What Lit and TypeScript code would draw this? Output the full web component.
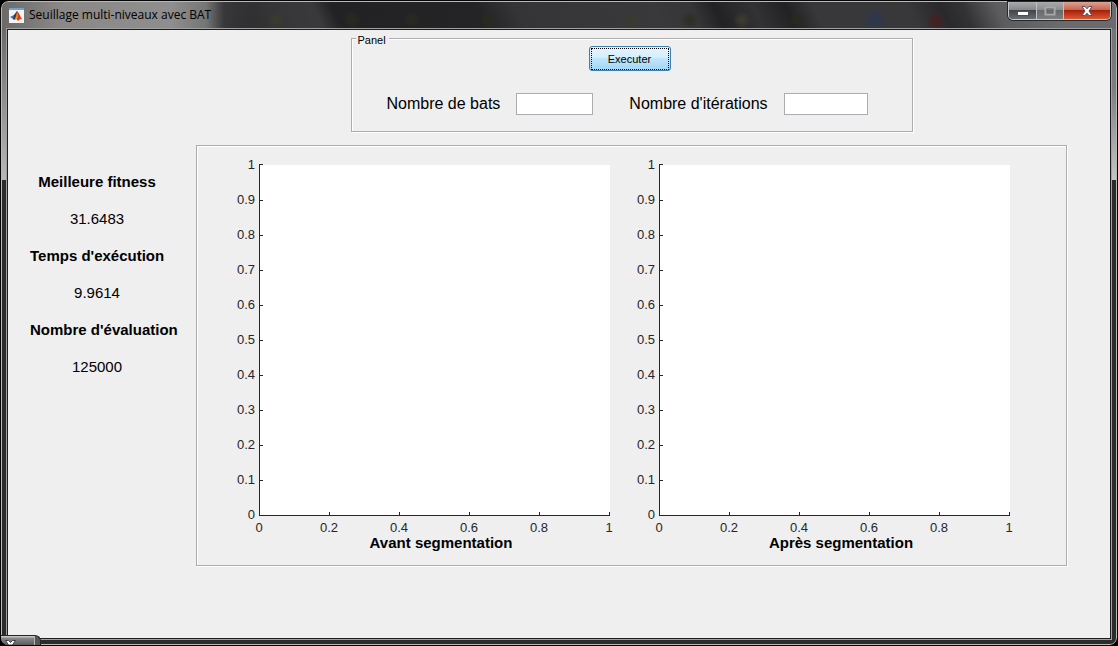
import { LitElement, html, svg, css } from "lit";
import { customElement, property } from "lit/decorators.js";

const ORIGIN_X = 30;
const ORIGIN_Y = 365;
const SIDE = 350;

@customElement("plot-axes")
class PlotAxes extends LitElement {
  @property() caption = "";

  static styles = css`
    :host { display: block; min-width: 0; }
    .figure { margin: 0; }
    .axes { display: block; width: 100%; height: auto; }
    .area { fill: #fff; }
    .line { stroke: #262626; stroke-width: 1; fill: none; shape-rendering: crispEdges; }
    .tick { font: 13px "Liberation Sans", Arial, sans-serif; fill: #262626; }
    .end { text-anchor: end; }
    .mid { text-anchor: middle; }
    .caption {
      padding-left: 24px;
      font: bold 15px/18px "Liberation Sans", Arial, sans-serif;
      text-align: center;
      color: #000;
    }
  `;

  render() {
    const ys = Array.from({ length: 11 }, (_, i) => i);
    const xs = Array.from({ length: 6 }, (_, i) => i);
    const label = (v: number) => String(Math.round(v * 10) / 10);
    return html`
      <figure class="figure">
        <svg class="axes" viewBox="0 0 400 384" role="img" aria-label=${this.caption}>
          <rect class="area" x=${ORIGIN_X} y=${ORIGIN_Y - SIDE} width=${SIDE + 1} height=${SIDE}></rect>
          <path class="line" d="M30.5 14V365.5H381"></path>
          ${ys.map((i) => {
            const y = ORIGIN_Y - i * 35;
            return svg`
              <path class="line" d="M31 ${y + (i === 10 ? -0.5 : 0.5)}h3"></path>
              <text class="tick end" x="26" y=${y + 4}>${label(i / 10)}</text>`;
          })}
          ${xs.map((i) => {
            const x = ORIGIN_X + i * 70;
            return svg`
              <path class="line" d="M${x + 0.5} 365v-3"></path>
              <text class="tick mid" x=${x} y="382">${label(i / 5)}</text>`;
          })}
        </svg>
        <figcaption class="caption">${this.caption}</figcaption>
      </figure>
    `;
  }
}

@customElement("app-root")
class AppRoot extends LitElement {
  static styles = css`
    :host {
      display: block;
      min-height: 100vh;
      background: #000;
      font-family: "Liberation Sans", Arial, sans-serif;
      color: #000;
    }
    * { box-sizing: border-box; }
    .window {
      position: relative;
      display: flex;
      flex-direction: column;
      min-height: 100vh;
      border: 1px solid #050505;
      border-radius: 8px;
      overflow: hidden;
    }
    .frame {
      flex: 1;
      display: flex;
      flex-direction: column;
      padding: 0 5px 5px;
      border: 1px solid #b9b9bb;
      border-radius: 7px;
      background:
        linear-gradient(90deg, #6c6969 0, #8b8987 60px, #8e8e8e 170px, #757575 204px, #38383a 222px, transparent 250px) 0 0 / 100% 27px no-repeat,
        radial-gradient(circle at 873px 18px, #2f374a 4px, transparent 13px) 0 0 / 100% 27px no-repeat,
        radial-gradient(circle at 934px 19px, #432022 3px, transparent 10px) 0 0 / 100% 27px no-repeat,
        radial-gradient(circle at 274px 18px, #3b3a2e 2px, transparent 9px) 0 0 / 100% 27px no-repeat,
        radial-gradient(circle at 350px 18px, #2a2920 2px, transparent 9px) 0 0 / 100% 27px no-repeat,
        radial-gradient(circle at 410px 18px, #2a2920 2px, transparent 9px) 0 0 / 100% 27px no-repeat,
        radial-gradient(circle at 486px 18px, #2a2920 2px, transparent 9px) 0 0 / 100% 27px no-repeat,
        radial-gradient(circle at 630px 18px, #3b3a2e 2px, transparent 9px) 0 0 / 100% 27px no-repeat,
        radial-gradient(circle at 688px 18px, #2f2e24 2px, transparent 9px) 0 0 / 100% 27px no-repeat,
        radial-gradient(circle at 740px 18px, #3b3a2e 2px, transparent 9px) 0 0 / 100% 27px no-repeat,
        radial-gradient(circle at 795px 18px, #2a2920 2px, transparent 9px) 0 0 / 100% 27px no-repeat,
        linear-gradient(65deg, #2a2a2c 200px, #38383a 270px, #39393b 292px, #222224 308px, #242426 440px, #353537 475px, #39393b 600px, #353537 634px, #222224 655px, #323234 690px, #222224 720px, #38383a 745px, #38383a 830px, #29292b 860px, #323234 880px, #5c5c5e 910px, #6a6b6d 960px) 0 0 / 100% 27px no-repeat,
        linear-gradient(#6c6969, #8c8887 60px, #bab6b5 150px) 0 27px / 5px 151px no-repeat,
        linear-gradient(#717375, #7c7e80 60px, #c2c4c4 150px) 100% 27px / 5px 151px no-repeat,
        #2b2b2b;
    }
    .titlebar { display: flex; align-items: flex-start; height: 27px; }
    .title {
      display: flex;
      align-items: center;
      gap: 5px;
      height: 26px;
      padding-left: 2px;
      margin: 0;
      flex: 1;
      font: 12px/16px "Open Sans", "Noto Sans", sans-serif;
      white-space: nowrap;
    }
    .logo { width: 15px; height: 15px; flex: none; }
    .controls {
      display: flex;
      height: 18px;
      border: 1px solid #c6c7c9;
      border-top: 0;
      border-radius: 0 0 5px 5px;
      overflow: hidden;
      box-shadow: 0 0 0 1px #29292b;
    }
    .ctl {
      display: flex;
      align-items: center;
      justify-content: center;
      width: 28px;
      padding: 0;
      border: 0;
      border-right: 1px solid #c0c1c3;
      background: linear-gradient(#a9abad, #828486 50%, #424549 50%, #686c74);
    }
    .ctl.max { width: 27px; background: linear-gradient(#a9abad, #88898b 50%, #67696b 50%, #7c7e80); }
    .ctl.close { width: 46px; border-right: 0; background: linear-gradient(#dfa193, #c4604b 50%, #a92008 50%, #d65a35); }
    .glyph { display: block; }
    .client {
      flex: 1;
      display: grid;
      grid-template-columns: 188px minmax(0, 1fr);
      align-content: start;
      padding-right: 43px;
      border: 1px solid #1c1e1c;
      outline: 1px solid #a0a29f;
      background: #efefef;
    }
    .stats { width: 134px; margin: 133px 0 0 22px; font-size: 15px; line-height: 37px; white-space: nowrap; }
    .name { font-weight: bold; text-align: center; width: max-content; min-width: 100%; }
    .value { margin: 0; text-align: center; }
    .main { display: flex; flex-direction: column; align-items: center; gap: 13px; }
    .panel {
      width: 562px;
      max-width: 100%;
      min-width: 0;
      margin: 0;
      padding: 0 39px 16px 35px;
      border: 1px solid #adadad;
      box-shadow: 1px 1px 0 #fff, inset 1px 1px 0 #fff;
    }
    .legend { margin-left: -31px; padding: 5px 3px 0 2px; font-size: 11px; line-height: 11px; background: #efefef; }
    .form { display: flex; flex-direction: column; align-items: center; gap: 22px; }
    .run {
      width: 82px;
      height: 25px;
      padding: 1px;
      border: 1px solid #3c7fb1;
      border-radius: 3px;
      background: linear-gradient(#e5f4fc, #d3effc 48%, #bee6fd 50%, #a4d6f4);
      font: 11px/13px "Liberation Sans", Arial, sans-serif;
      color: #000;
    }
    .focus { display: block; padding: 4px 0 3px; border: 1px dotted #000; }
    .fields { display: flex; flex-wrap: wrap; align-self: stretch; gap: 12px 36px; }
    .field { display: flex; align-items: center; gap: 16px; font-size: 16px; line-height: 20px; }
    .box { width: 77px; height: 22px; padding: 0 4px; border: 1px solid #abadb3; background: #fff; font: inherit; }
    .box.wide { width: 84px; }
    .plots {
      align-self: stretch;
      display: grid;
      grid-template-columns: 1fr 1fr;
      padding: 4px 37px 13px 32px;
      border: 1px solid #adadad;
      box-shadow: 1px 1px 0 #fff, inset 1px 1px 0 #fff;
    }
    .peek {
      position: absolute;
      left: -1px;
      bottom: -1px;
      width: 41px;
      height: 11px;
      border: 1px solid #242426;
      border-left: 0;
      border-bottom: 0;
      border-radius: 0 6px 0 0;
      background: linear-gradient(90deg, transparent 34px, #b5b5b5 34px, #b5b5b5 35px, #555 35px), linear-gradient(#c4c4c4 1px, #8a8a8a 2px, #555);
      overflow: hidden;
    }
  `;

  render() {
    return html`
      <div class="window">
        <div class="frame">
          <header class="titlebar">
            <h1 class="title">
              <svg class="logo" viewBox="0 0 15 15" aria-hidden="true">
                <rect width="15" height="15" fill="#f4f4f4"></rect>
                <rect width="15" height="2" fill="#6fa3cf"></rect>
                <path d="M1 9L5 7L7 8L4 11Z" fill="#3f78b0"></path>
                <path d="M5 7L8 3L8 9L5 12L4 11Z" fill="#3b3550"></path>
                <path d="M8 3C10 4 11 9 14 12C12 10 11 11 9 13C8 11 7 11 5 12C7 9 7 6 8 3Z" fill="#c9441c"></path>
                <path d="M8 4C9 6 9 9 8 11L6 11C7 9 8 7 8 4Z" fill="#f09a3c"></path>
              </svg>
              Seuillage multi-niveaux avec BAT
            </h1>
            <div class="controls">
              <button class="ctl" aria-label="Réduire">
                <svg class="glyph" width="12" height="12"><rect x="0.5" y="6.5" width="11" height="4" fill="#fff" stroke="#4c4f5c"></rect></svg>
              </button>
              <button class="ctl max" aria-label="Agrandir">
                <svg class="glyph" width="12" height="10"><rect x="1.5" y="1.5" width="9" height="7" fill="none" stroke="#a7a9ab" stroke-width="2"></rect><rect x="3" y="3" width="6" height="4" fill="none" stroke="#66686a"></rect></svg>
              </button>
              <button class="ctl close" aria-label="Fermer">
                <svg class="glyph" width="14" height="12" viewBox="0 0 14 12"><path d="M2 1.500H5L7 3.800L9 1.500H12L9 6L12 10.500H9L7 8.200L5 10.500H2L5 6Z" fill="#fff" stroke="#535666"></path></svg>
              </button>
            </div>
          </header>
          <main class="client">
            <dl class="stats">
              <dt class="name">Meilleure fitness</dt>
              <dd class="value">31.6483</dd>
              <dt class="name">Temps d'exécution</dt>
              <dd class="value">9.9614</dd>
              <dt class="name">Nombre d'évaluation</dt>
              <dd class="value">125000</dd>
            </dl>
            <div class="main">
              <fieldset class="panel">
                <legend class="legend">Panel</legend>
                <div class="form">
                  <button class="run" type="button"><span class="focus">Executer</span></button>
                  <div class="fields">
                    <div class="field">
                      <label for="bats">Nombre de bats</label>
                      <input class="box" id="bats" type="text" />
                    </div>
                    <div class="field">
                      <label for="iterations">Nombre d'itérations</label>
                      <input class="box wide" id="iterations" type="text" />
                    </div>
                  </div>
                </div>
              </fieldset>
              <section class="plots">
                <plot-axes caption="Avant segmentation"></plot-axes>
                <plot-axes caption="Après segmentation"></plot-axes>
              </section>
            </div>
          </main>
        </div>
        <div class="peek">
          <svg class="glyph" width="20" height="10" aria-hidden="true"><path d="M0 5L4 9L0 12M5.500 4.500H8.500L10.500 6.500L12.500 4.500H15.500L12.500 9H8.500Z" fill="#fff" stroke="#3b3d4c"></path></svg>
        </div>
      </div>
    `;
  }
}
